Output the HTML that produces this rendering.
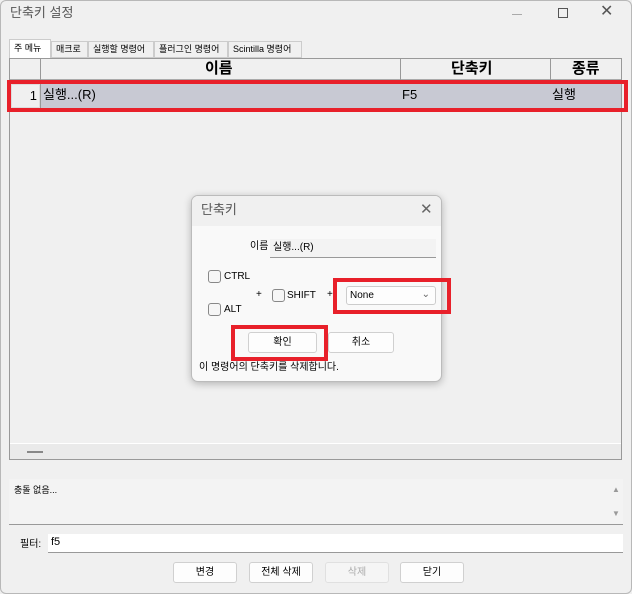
<!DOCTYPE html>
<html><head><meta charset="utf-8"><style>
*{box-sizing:border-box;margin:0;padding:0}
body{width:632px;height:594px;background:#f0f0f0;font-family:"Liberation Sans","Noto Sans CJK KR",sans-serif;position:relative;overflow:hidden;font-size:11px;color:#000;line-height:1.15}
.a{position:absolute}
.btn{position:absolute;background:#fdfdfd;border:1px solid #d0d0d0;border-radius:3px;text-align:center;font-size:10px;line-height:19px;height:21px}
.cb{position:absolute;width:13px;height:13px;border:1px solid #888;border-radius:3px;background:#f6f6f6}
</style></head><body>
<div class="a" style="left:0;top:0;width:632px;height:594px;border:1px solid #b8b8b8;border-radius:6px;background:#f0f0f0"></div>
<div class="a" style="left:10px;top:6px;font-size:13px;color:#555">단축키 설정</div>
<div class="a" style="left:512px;top:14px;width:10px;height:1px;background:#aaa"></div>
<div class="a" style="left:558px;top:8px;width:10px;height:10px;border:1px solid #555"></div>
<div class="a" style="left:600px;top:3px;font-size:16px;color:#555">✕</div>
<!-- tabs -->
<div class="a" style="left:9px;top:39px;width:42px;height:19px;background:#fff;border:1px solid #ccc;border-bottom:none;font-size:9px;padding:3px 4px">주 메뉴</div>
<div class="a" style="left:51px;top:41px;width:37px;height:17px;border:1px solid #ccc;font-size:9px;padding:2px 4px">매크로</div>
<div class="a" style="left:88px;top:41px;width:66px;height:17px;border:1px solid #ccc;font-size:9px;padding:2px 4px">실행할 명령어</div>
<div class="a" style="left:154px;top:41px;width:74px;height:17px;border:1px solid #ccc;font-size:9px;padding:2px 4px">플러그인 명령어</div>
<div class="a" style="left:228px;top:41px;width:74px;height:17px;border:1px solid #ccc;font-size:9px;padding:2px 4px">Scintilla 명령어</div>
<!-- table -->
<div class="a" style="left:9px;top:58px;width:613px;height:402px;border:1px solid #999;background:#f0f0f0"></div>
<div class="a" style="left:10px;top:59px;width:611px;height:21px;background:#f0f0f0;border-bottom:1px solid #aaa"></div>
<div class="a" style="left:40px;top:59px;width:1px;height:50px;background:#999"></div>
<div class="a" style="left:400px;top:59px;width:1px;height:21px;background:#999"></div>
<div class="a" style="left:550px;top:59px;width:1px;height:21px;background:#999"></div>
<div class="a" style="left:205px;top:60px;font-size:15px;font-weight:bold">이름</div>
<div class="a" style="left:451px;top:60px;font-size:15px;font-weight:bold">단축키</div>
<div class="a" style="left:572px;top:60px;font-size:15px;font-weight:bold">종류</div>
<div class="a" style="left:41px;top:84px;width:580px;height:24px;background:#c8c9d3"></div>
<div class="a" style="left:11px;top:84px;width:29px;height:24px;background:#f0f0f0;border:1px solid #ddd;text-align:right;font-size:13px;padding:4px 2px">1</div>
<div class="a" style="left:43px;top:88px;font-size:13px">실행...(R)</div>
<div class="a" style="left:402px;top:88px;font-size:13px">F5</div>
<div class="a" style="left:552px;top:88px;font-size:13px">실행</div>
<div class="a" style="left:7px;top:80px;width:621px;height:32px;border:4px solid #e8202a"></div>
<div class="a" style="left:10px;top:443px;width:611px;height:16px;background:#eaeaea;border-top:1px solid #fff"></div>
<div class="a" style="left:27px;top:451px;width:16px;height:2px;background:#888"></div>
<!-- dialog -->
<div class="a" style="left:191px;top:195px;width:251px;height:187px;background:#f9f9f9;border:1px solid #bbb;border-radius:7px;box-shadow:0 2px 8px rgba(0,0,0,.25);overflow:hidden">
<div style="height:30px;background:#f0f0f0;font-size:13px;color:#555;padding:7px 9px">단축키</div>
</div>
<div class="a" style="left:420px;top:201px;font-size:15px;color:#666">✕</div>
<div class="a" style="left:250px;top:241px;font-size:10px">이름</div>
<div class="a" style="left:270px;top:239px;width:166px;height:19px;background:#f3f3f3;border-bottom:1px solid #999;font-size:10px;padding:3px 3px">실행...(R)</div>
<div class="cb" style="left:208px;top:270px"></div><div class="a" style="left:224px;top:271px;font-size:10px">CTRL</div>
<div class="cb" style="left:208px;top:303px"></div><div class="a" style="left:224px;top:304px;font-size:10px">ALT</div>
<div class="a" style="left:256px;top:289px;font-size:10px">+</div>
<div class="cb" style="left:272px;top:289px"></div><div class="a" style="left:287px;top:290px;font-size:10px">SHIFT</div>
<div class="a" style="left:327px;top:289px;font-size:10px">+</div>
<div class="a" style="left:346px;top:286px;width:90px;height:19px;background:#fdfdfd;border:1px solid #ccc;border-radius:3px;font-size:10px;padding:3px 3px">None<span style="position:absolute;right:5px;top:2px;color:#666">⌄</span></div>
<div class="a" style="left:333px;top:278px;width:118px;height:36px;border:4px solid #e8202a"></div>
<div class="btn" style="left:248px;top:332px;width:69px">확인</div>
<div class="btn" style="left:328px;top:332px;width:66px">취소</div>
<div class="a" style="left:231px;top:325px;width:97px;height:36px;border:4px solid #e8202a"></div>
<div class="a" style="left:199px;top:362px;font-size:10px">이 명령어의 단축키를 삭제합니다.</div>
<!-- bottom -->
<div class="a" style="left:9px;top:479px;width:614px;height:46px;background:#f3f3f3;border-bottom:1px solid #999"></div>
<div class="a" style="left:14px;top:485px;font-size:9px">충돌 없음...</div>
<div class="a" style="left:612px;top:485px;font-size:8px;color:#999">▲</div>
<div class="a" style="left:612px;top:509px;font-size:8px;color:#999">▼</div>
<div class="a" style="left:20px;top:539px;font-size:10px">필터:</div>
<div class="a" style="left:48px;top:534px;width:575px;height:19px;background:#fff;border-bottom:1px solid #999;font-size:11px;padding:2px 3px">f5</div>
<div class="btn" style="left:173px;top:562px;width:64px">변경</div>
<div class="btn" style="left:249px;top:562px;width:64px">전체 삭제</div>
<div class="btn" style="left:325px;top:562px;width:64px;background:#f5f5f5;color:#aaa;border-color:#e0e0e0">삭제</div>
<div class="btn" style="left:400px;top:562px;width:64px">닫기</div>
</body></html>
